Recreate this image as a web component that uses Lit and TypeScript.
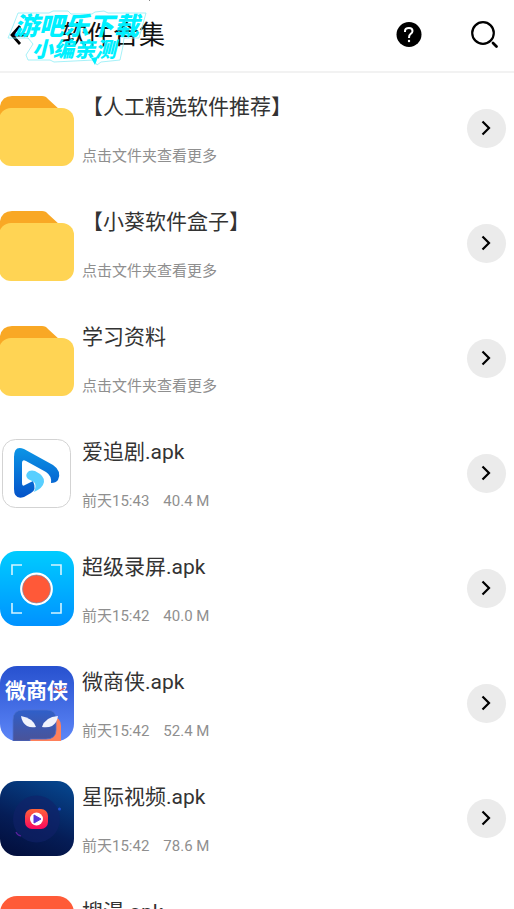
import { LitElement, html, css, svg } from "lit";
import { customElement, property } from "lit/decorators.js";

type IconKind = "folder" | "player" | "recorder" | "shop" | "star" | "comic";

interface Entry {
  icon: IconKind;
  name: string;
  note: string;
  size?: string;
}

const entries: Entry[] = [
  { icon: "folder", name: "【人工精选软件推荐】", note: "点击文件夹查看更多" },
  { icon: "folder", name: "【小葵软件盒子】", note: "点击文件夹查看更多" },
  { icon: "folder", name: "学习资料", note: "点击文件夹查看更多" },
  { icon: "player", name: "爱追剧.apk", note: "前天15:43", size: "40.4 M" },
  { icon: "recorder", name: "超级录屏.apk", note: "前天15:42", size: "40.0 M" },
  { icon: "shop", name: "微商侠.apk", note: "前天15:42", size: "52.4 M" },
  { icon: "star", name: "星际视频.apk", note: "前天15:42", size: "78.6 M" },
  { icon: "comic", name: "搜漫.apk", note: "" },
];

const art = {
  folder: svg`
    <path d="M0 24V15Q2 5 12 5H42Q46 5 48 8L60 19V30H0Z" fill="#f9a825"/>
    <rect x="-1" y="17" width="75" height="58" rx="12" fill="#ffd454"/>`,
  player: svg`
    <defs>
      <linearGradient id="p" x1="0" y1="0" x2="0" y2="1">
        <stop offset="0" stop-color="#0c95e6"/><stop offset="1" stop-color="#0453c9"/>
      </linearGradient>
    </defs>
    <rect x="2.5" y="3.5" width="68" height="68" rx="13" fill="#fff" stroke="#c8c8c8" stroke-width="0.8"/>
    <path d="M14 21Q14 9 24 13L53 29Q62 35 58 44Q56 47 51 47Q52 40 46 36L26 25Q22 23 22 27V47Q22 51 25 49L33 45Q37 54 31 57L24 61Q14 64 14 53Z" fill="url(#p)"/>
    <path d="M29 35Q32 34 35 35Q45 40 44 46Q43 52 34 56Q37 49 34 46L28 43Q24 39 29 35Z" fill="#58cfff"/>`,
  recorder: svg`
    <defs>
      <linearGradient id="r" x1="0" y1="0" x2="0" y2="1">
        <stop offset="0" stop-color="#00ccff"/><stop offset="1" stop-color="#0092ff"/>
      </linearGradient>
    </defs>
    <rect width="74" height="75" rx="17" fill="url(#r)"/>
    <path d="M12 24V14H22M51 14H61V24M61 52V62H51M22 62H12V52" fill="none" stroke="#d5f4ff" stroke-width="1.6"/>
    <circle cx="36.5" cy="38" r="15.2" fill="#ff5938" stroke="#fff" stroke-width="2.4"/>
    <circle cx="36.5" cy="38" r="14" fill="none" stroke="#7b8fae" stroke-width="0.7"/>`,
  shop: svg`
    <defs>
      <linearGradient id="s" x1="0" y1="0" x2="0" y2="1">
        <stop offset="0" stop-color="#2751cf"/><stop offset="1" stop-color="#5d86f7"/>
      </linearGradient>
      <linearGradient id="m" x1="0" y1="0" x2="0" y2="1">
        <stop offset="0" stop-color="#2f5fca"/><stop offset="1" stop-color="#4a5398"/>
      </linearGradient>
    </defs>
    <rect width="74" height="75" rx="17" fill="url(#s)"/>
    <text x="5" y="32" class="brand">微商侠</text>
    <path d="M54 22L59 25L65 22" fill="none" stroke="#e2524c" stroke-width="1.2"/>
    <path d="M52 51Q61 51 61 60V75H30V70Z" fill="#ff805a"/>
    <path d="M13 75V54Q13 44 23 44H47Q56 44 56 53V64Q56 73 46 73H30V75Z" fill="url(#m)" stroke="#4b70cf" stroke-width="0.8"/>
    <path d="M21 50Q33 52 36 61Q31 62 27 60Q22 57 21 50Z" fill="#f1f3fc"/>
    <path d="M58 50Q45 51 42 61Q48 62 52 60Q57 57 58 50Z" fill="#f1f3fc"/>`,
  star: svg`
    <defs>
      <linearGradient id="n" x1="0.7" y1="0" x2="0.3" y2="1">
        <stop offset="0" stop-color="#06438a"/><stop offset="0.6" stop-color="#051d57"/><stop offset="1" stop-color="#03103f"/>
      </linearGradient>
      <linearGradient id="b" x1="0" y1="0" x2="0" y2="1">
        <stop offset="0" stop-color="#ff6438"/><stop offset="1" stop-color="#fa075f"/>
      </linearGradient>
    </defs>
    <rect width="74" height="75" rx="17" fill="url(#n)"/>
    <circle cx="36.5" cy="38" r="23.5" fill="#112269" opacity="0.6"/>
    <circle cx="59.5" cy="28" r="1.5" fill="#214fd0"/>
    <path d="M16 51Q17 54 21 55" fill="none" stroke="#57209b" stroke-width="1.2"/>
    <rect x="25" y="28" width="23" height="20" rx="7" fill="url(#b)"/>
    <circle cx="36.5" cy="38" r="6.5" fill="#fff"/>
    <path d="M34 34L41 38L34 42Z" fill="#5a35d8" stroke="#5a35d8" stroke-linejoin="round"/>`,
  comic: svg`<rect width="74" height="75" rx="17" fill="#ff5b38"/>`,
};

@customElement("entry-row")
class EntryRow extends LitElement {
  @property({ attribute: false }) entry!: Entry;

  static styles = css`
    :host {
      display: flex;
      align-items: center;
      gap: 8px;
      height: 115px;
      padding: 0 8px 1px 0;
      box-sizing: border-box;
    }
    .icon {
      flex: none;
      width: 74px;
      height: 75px;
    }
    .brand {
      font: 700 21px "Noto Sans CJK SC", sans-serif;
      fill: #fff;
    }
    .text {
      flex: 1;
      min-width: 0;
      display: flex;
      flex-direction: column;
      gap: 24px;
      padding-top: 2px;
    }
    .name {
      margin: 0;
      font-size: 21px;
      line-height: 30px;
      font-weight: 400;
      color: #333;
      white-space: nowrap;
    }
    .meta {
      display: flex;
      gap: 14px;
      min-height: 20px;
      margin: 0;
      font-size: 15px;
      line-height: 20px;
      color: #8f8f8f;
    }
    .open {
      flex: none;
      display: grid;
      place-items: center;
      width: 39px;
      height: 39px;
      padding: 0;
      border: 0;
      border-radius: 50%;
      background: #ebebeb;
      cursor: pointer;
    }
  `;

  render() {
    const { icon, name, note, size } = this.entry;
    return html`
      <svg class="icon" viewBox="0 0 74 75" aria-hidden="true">${art[icon]}</svg>
      <div class="text">
        <h2 class="name">${name}</h2>
        <p class="meta"><span>${note}</span>${size ? html`<span>${size}</span>` : ""}</p>
      </div>
      <button class="open" aria-label=${name}>
        <svg width="13" height="16" viewBox="0 0 13 16" fill="none" stroke="#000" stroke-width="2.2">
          <path d="M2.5 1.5L9 8L2.5 14.5" />
        </svg>
      </button>
    `;
  }
}

@customElement("app-root")
class AppRoot extends LitElement {
  static styles = css`
    :host {
      display: block;
      position: relative;
      height: 100vh;
      overflow: hidden;
      background: #fff;
      font-family: Roboto, "Noto Sans CJK SC", sans-serif;
    }
    .bar {
      display: flex;
      align-items: center;
      height: 71px;
      padding: 0 14px 2px 8px;
      box-sizing: border-box;
      box-shadow: 0 2px 0 #f2f2f2;
    }
    .tool {
      display: grid;
      place-items: center;
      padding: 0;
      border: 0;
      background: none;
      cursor: pointer;
    }
    .title {
      flex: 1;
      margin: 0 0 0 33px;
      font-size: 26px;
      line-height: 36px;
      font-weight: 400;
      color: #111;
    }
    .tools {
      display: flex;
      gap: 47px;
    }
    .list {
      margin: 0;
      padding: 0;
      list-style: none;
    }
    .stamp {
      position: absolute;
      top: 0;
      left: 0;
      pointer-events: none;
    }
    .stamp-text {
      font-family: "Noto Sans CJK SC", sans-serif;
      font-weight: 900;
      font-style: italic;
      fill: #00f0ff;
    }
    .large {
      font-size: 25px;
    }
    .small {
      font-size: 21px;
    }
  `;

  render() {
    return html`
      <header class="bar">
        <button class="tool" aria-label="返回">
          <svg width="20" height="24" viewBox="0 0 20 24" fill="none" stroke="#000" stroke-width="2.8">
            <path d="M12 3L4 12L12 21M4 12H20" />
          </svg>
        </button>
        <h1 class="title">软件合集</h1>
        <div class="tools">
          <button class="tool" aria-label="帮助">
            <svg width="28" height="28" viewBox="0 0 28 28">
              <circle cx="14" cy="13.5" r="12.5" fill="#000" />
              <path d="M10 11V10Q10 7 14 7Q17.5 7 17.5 10Q17.5 12 15.5 13Q14 14 14 17" fill="none" stroke="#fff" stroke-width="2" />
              <circle cx="14" cy="20" r="1.2" fill="#fff" />
            </svg>
          </button>
          <button class="tool" aria-label="搜索">
            <svg width="30" height="30" viewBox="0 0 30 30" fill="none" stroke="#000">
              <circle cx="13" cy="13" r="10.8" stroke-width="2.2" />
              <path d="M23 23L26.5 26.5" stroke-width="2.8" stroke-linecap="round" />
            </svg>
          </button>
        </div>
      </header>
      <ul class="list">
        ${entries.map((e) => html`<li><entry-row .entry=${e}></entry-row></li>`)}
      </ul>
      <svg class="stamp" width="152" height="70" viewBox="0 0 152 70">
        <path d="M18 13H49L53 11H68L71 14H92L95 12L104 11L108 13H146L139 38H124L123 46L120 60L101 62L97 65L94 60L54 62L50 60H28L26 55L33 44L28 38H8L13 26Z" fill="none" stroke="#8eeef6" stroke-width="0.8" />
        <path d="M91 58L95 65L98 57Z" fill="#00f0ff" />
        <path d="M149.5 0V1" stroke="#888" />
        <text x="14" y="35" class="stamp-text large">游吧乐下载</text>
        <text x="32" y="57" class="stamp-text small">小编亲测</text>
      </svg>
    `;
  }
}
